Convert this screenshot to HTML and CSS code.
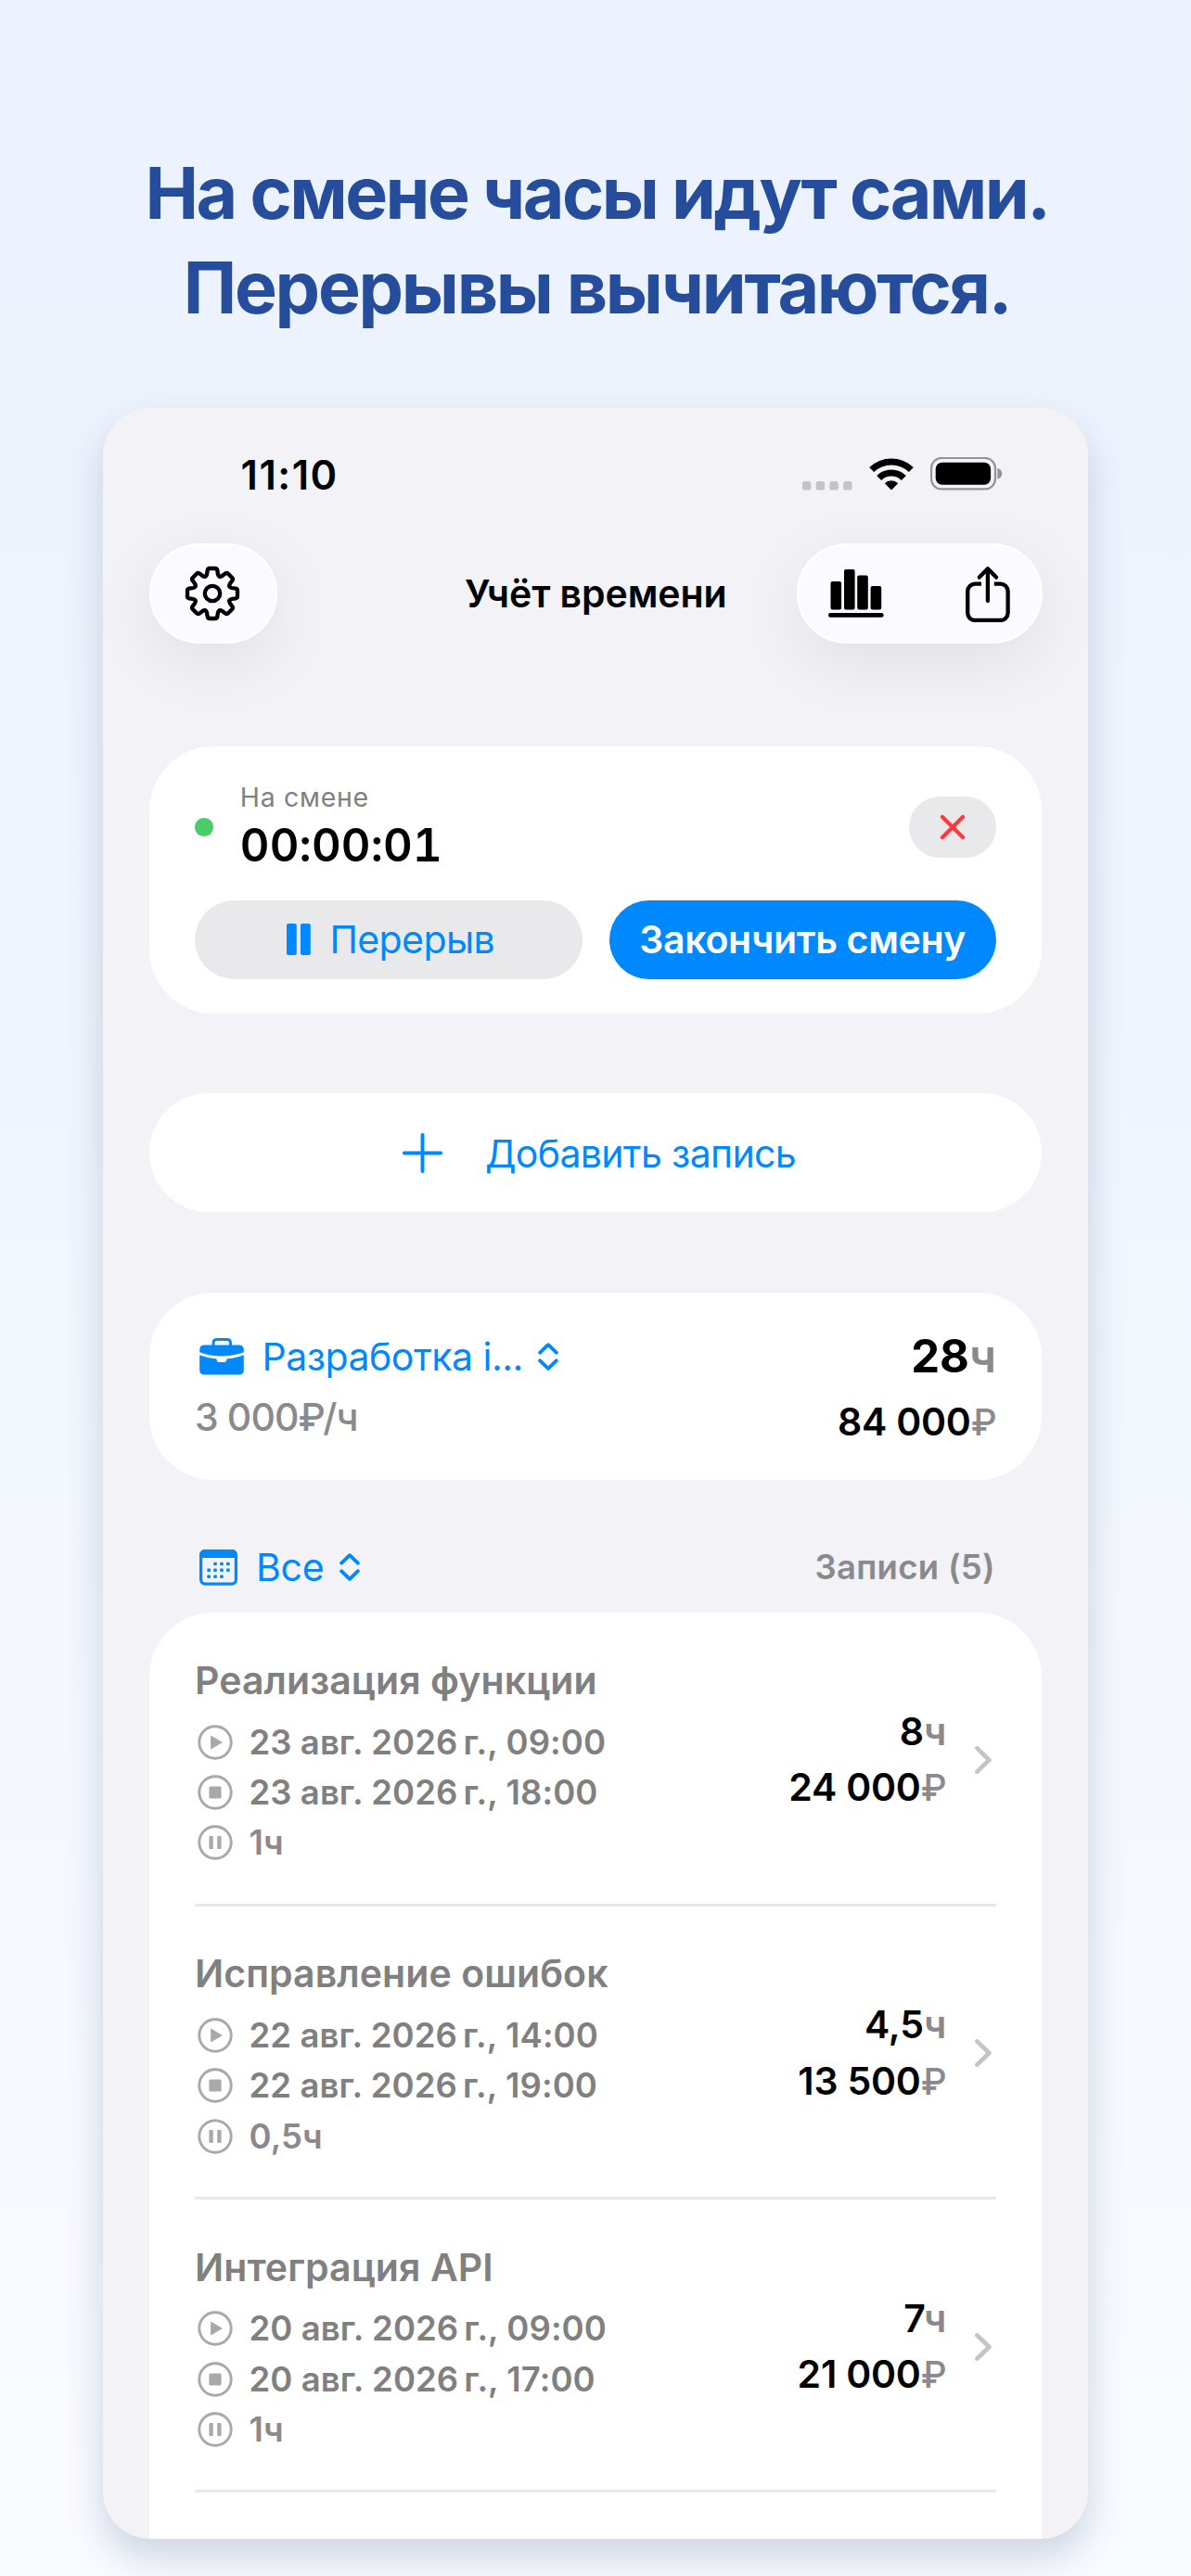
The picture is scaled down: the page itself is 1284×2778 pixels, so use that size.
FILE: index.html
```html
<!DOCTYPE html>
<html lang="ru">
<head>
<meta charset="utf-8">
<title>Учёт времени</title>
<link rel="stylesheet" href="styles.css">
</head>
<body>
<svg class="defs" width="0" height="0" aria-hidden="true">
  <symbol id="play" viewBox="0 0 38 38"><circle cx="19" cy="19" r="17.2" fill="none" stroke="currentColor" stroke-width="2.9"/><path d="M14.8 12.6v12.8L25.8 19z" fill="currentColor" stroke="currentColor" stroke-width="1.4" stroke-linejoin="round"/></symbol>
  <symbol id="stop" viewBox="0 0 38 38"><circle cx="19" cy="19" r="17.2" fill="none" stroke="currentColor" stroke-width="2.9"/><rect x="12.4" y="12.4" width="13.2" height="13.2" rx="1.6" fill="currentColor"/></symbol>
  <symbol id="pause" viewBox="0 0 38 38"><circle cx="19" cy="19" r="17.2" fill="none" stroke="currentColor" stroke-width="2.9"/><rect x="12.4" y="12" width="4.4" height="14" rx="1" fill="currentColor"/><rect x="21.2" y="12" width="4.4" height="14" rx="1" fill="currentColor"/></symbol>
  <symbol id="updown" viewBox="0 0 22 30"><path d="M2.2 10.6L11 2.2l8.8 8.4M2.2 19.4l8.8 8.4 8.8-8.4" fill="none" stroke="currentColor" stroke-width="3.9" stroke-linecap="round" stroke-linejoin="round"/></symbol>
  <symbol id="next" viewBox="0 0 18 30"><path d="M2.4 2.4L15.4 15 2.4 27.6" fill="none" stroke="currentColor" stroke-width="4.7" stroke-linecap="round" stroke-linejoin="round"/></symbol>
  <path id="tooth" d="M-7.6-18.4Q-6.3-19-6-20.5L-5.3-25Q-4.9-27-3-27H3Q4.9-27 5.3-25L6-20.5Q6.3-19 7.6-18.4"/>
</svg>

<h1 class="headline">На смене часы идут сами.<br><span class="headline-second">Перерывы вычитаются.</span></h1>

<main class="phone">
  <div class="status">
    <span class="clock">11:10</span>
    <div class="status-icons">
      <svg class="cell" width="54" height="10" viewBox="0 0 54 10"><rect width="9.4" height="9.6" rx="2.6"/><rect x="14.7" width="9.4" height="9.6" rx="2.6"/><rect x="29.4" width="9.4" height="9.6" rx="2.6"/><rect x="44.1" width="9.4" height="9.6" rx="2.6"/></svg>
      <svg class="wifi" width="48" height="35" viewBox="0 0 48 35"><path d="M2.7 12.6a30.6 30.6 0 0 1 42.6 0M10.7 21.4a19 19 0 0 1 26.6 0" fill="none" stroke="#000" stroke-width="7"/><path d="M24 34.4L16.8 27.3a10.2 10.2 0 0 1 14.4 0z"/></svg>
      <svg class="battery" width="78" height="36" viewBox="0 0 78 36"><rect x="1" y="1" width="69" height="33.4" rx="11" fill="none" stroke="#949498" stroke-width="2.2"/><rect x="5.7" y="5.7" width="59.4" height="24" rx="7"/><path d="M72.4 11.8q4.8 1.6 4.8 5.9t-4.8 5.9z" fill="#949498"/></svg>
    </div>
  </div>

  <nav class="nav">
    <button class="glass glass-one" aria-label="Настройки">
      <svg width="62" height="62" viewBox="-31 -31 62 62" fill="none" stroke="#000" stroke-width="4.3" stroke-linecap="round"><use href="#tooth"/><use href="#tooth" transform="rotate(45)"/><use href="#tooth" transform="rotate(90)"/><use href="#tooth" transform="rotate(135)"/><use href="#tooth" transform="rotate(180)"/><use href="#tooth" transform="rotate(225)"/><use href="#tooth" transform="rotate(270)"/><use href="#tooth" transform="rotate(315)"/><circle r="8.2"/></svg>
    </button>
    <h2 class="nav-title">Учёт времени</h2>
    <div class="glass glass-two">
      <svg width="60" height="54" viewBox="0 0 60 54"><rect x="2.5" y="14" width="11.6" height="30.6" rx="2"/><rect x="17" y="1" width="11.6" height="43.6" rx="2"/><rect x="31.2" y="7.4" width="11.6" height="37.2" rx="2"/><rect x="45.6" y="19" width="11.6" height="25.6" rx="2"/><rect x="0" y="48" width="59.6" height="4.8" rx="2.4"/></svg>
      <svg width="50" height="62" viewBox="0 0 50 62" fill="none" stroke="#000" stroke-width="4.3"><path d="M18 20.6h-6.8a8 8 0 0 0-8 8V52a8 8 0 0 0 8 8h27.4a8 8 0 0 0 8-8V28.6a8 8 0 0 0-8-8h-6.8"/><path d="M24.9 4.6V39M15.8 13.6l9.1-9.3 9.1 9.3" stroke-linecap="round" stroke-linejoin="round"/></svg>
    </div>
  </nav>

  <section class="card shift">
    <div class="shift-top">
      <span class="dot"></span>
      <div class="shift-text">
        <div class="shift-label">На смене</div>
        <div class="timer">00:00:01</div>
      </div>
      <button class="cancel" aria-label="Отменить">
        <svg width="28" height="28" viewBox="0 0 28 28"><path d="M3 3l22 22M25 3L3 25" stroke="#ff383c" stroke-width="4.2" stroke-linecap="round"/></svg>
      </button>
    </div>
    <div class="shift-actions">
      <button class="pill pill-break">
        <svg width="26" height="34" viewBox="0 0 26 34" fill="currentColor"><rect width="10.8" height="34" rx="2"/><rect x="15" width="10.8" height="34" rx="2"/></svg>
        <span>Перерыв</span>
      </button>
      <button class="pill pill-finish">Закончить смену</button>
    </div>
  </section>

  <button class="card add">
    <svg width="43" height="43" viewBox="0 0 43 43"><path d="M21.5 1.9v39.2M1.9 21.5h39.2" stroke="currentColor" stroke-width="3.9" stroke-linecap="round"/></svg>
    <span>Добавить запись</span>
  </button>

  <section class="card client">
    <div class="client-left">
      <div class="client-name">
        <svg width="48" height="40" viewBox="0 0 48 40"><path d="M15 8V5.4Q15 1.5 19 1.5H29.5Q33.5 1.5 33.5 5.4V8" fill="none" stroke="currentColor" stroke-width="3"/><path d="M5.5 7.6H42.5Q47.8 7.6 47.8 13V15.2Q36 19.6 24 19.6T.2 15.2V13Q.2 7.6 5.5 7.6z" fill="currentColor"/><path d="M.2 18.2Q8.5 21.5 18.6 22.6V23.6Q18.6 26 21 26H27Q29.4 26 29.4 23.6V22.6Q39.5 21.5 47.8 18.2V34.5Q47.8 39.6 42.5 39.6H5.5Q.2 39.6 .2 34.5z" fill="currentColor"/></svg>
        <span>Разработка і...</span>
        <svg class="updown" width="22" height="30"><use href="#updown"/></svg>
      </div>
      <div class="client-rate">3 000₽/ч</div>
    </div>
    <div class="client-right">
      <div class="total-hours">28<span class="unit">ч</span></div>
      <div class="total-money">84 000<span class="ruble">₽</span></div>
    </div>
  </section>

  <div class="list-head">
    <div class="filter">
      <svg width="41" height="39" viewBox="0 0 41 39"><rect x="1.6" y="1.4" width="37.8" height="35.7" rx="4.6" fill="none" stroke="currentColor" stroke-width="3.2"/><path d="M1 10.4V5Q1 1 5 1H36Q40 1 40 5V10.4Q39.6 9 37.5 9H3.5Q1.4 9 1 10.4z" fill="currentColor"/><g fill="currentColor"><rect x="15.2" y="13.8" width="3.7" height="3.5" rx="1"/><rect x="22.1" y="13.8" width="3.7" height="3.5" rx="1"/><rect x="29" y="13.8" width="3.7" height="3.5" rx="1"/><rect x="8.3" y="20.6" width="3.7" height="3.5" rx="1"/><rect x="15.2" y="20.6" width="3.7" height="3.5" rx="1"/><rect x="22.1" y="20.6" width="3.7" height="3.5" rx="1"/><rect x="29" y="20.6" width="3.7" height="3.5" rx="1"/><rect x="8.3" y="27.4" width="3.7" height="3.5" rx="1"/><rect x="15.2" y="27.4" width="3.7" height="3.5" rx="1"/><rect x="22.1" y="27.4" width="3.7" height="3.5" rx="1"/></g></svg>
      <span>Все</span>
      <svg class="updown" width="22" height="30"><use href="#updown"/></svg>
    </div>
    <span class="count">Записи (5)</span>
  </div>

  <section class="list">
    <article class="entry">
      <div class="entry-left">
        <h3 class="entry-title">Реализация функции</h3>
        <div class="line"><svg width="38" height="38"><use href="#play"/></svg><span>23 авг. 2026&#8239;г., 09:00</span></div>
        <div class="line"><svg width="38" height="38"><use href="#stop"/></svg><span>23 авг. 2026&#8239;г., 18:00</span></div>
        <div class="line line-break"><svg width="38" height="38"><use href="#pause"/></svg><span>1ч</span></div>
      </div>
      <div class="entry-sum"><div>8<span class="unit">ч</span></div><div>24 000<span class="ruble">₽</span></div></div>
      <svg class="next" width="18" height="30"><use href="#next"/></svg>
    </article>
    <article class="entry">
      <div class="entry-left">
        <h3 class="entry-title">Исправление ошибок</h3>
        <div class="line"><svg width="38" height="38"><use href="#play"/></svg><span>22 авг. 2026&#8239;г., 14:00</span></div>
        <div class="line"><svg width="38" height="38"><use href="#stop"/></svg><span>22 авг. 2026&#8239;г., 19:00</span></div>
        <div class="line line-break"><svg width="38" height="38"><use href="#pause"/></svg><span>0,5ч</span></div>
      </div>
      <div class="entry-sum"><div>4,5<span class="unit">ч</span></div><div>13 500<span class="ruble">₽</span></div></div>
      <svg class="next" width="18" height="30"><use href="#next"/></svg>
    </article>
    <article class="entry">
      <div class="entry-left">
        <h3 class="entry-title">Интеграция API</h3>
        <div class="line"><svg width="38" height="38"><use href="#play"/></svg><span>20 авг. 2026&#8239;г., 09:00</span></div>
        <div class="line"><svg width="38" height="38"><use href="#stop"/></svg><span>20 авг. 2026&#8239;г., 17:00</span></div>
        <div class="line line-break"><svg width="38" height="38"><use href="#pause"/></svg><span>1ч</span></div>
      </div>
      <div class="entry-sum"><div>7<span class="unit">ч</span></div><div>21 000<span class="ruble">₽</span></div></div>
      <svg class="next" width="18" height="30"><use href="#next"/></svg>
    </article>
  </section>
</main>
</body>
</html>
```

FILE: styles.css
```css
* { box-sizing: border-box; }

html, body { margin: 0; }

body {
  height: 2778px;
  padding-top: 157px;
  overflow: hidden;
  background: linear-gradient(180deg, #ebf2fd 0%, #f0f5fd 40%, #f9fbff 100%);
  font-family: Inter, "Noto Sans", sans-serif;
  font-size: 41px;
  color: #000;
}

.defs { display: block; }

svg { display: block; flex: none; }

button {
  margin: 0;
  padding: 0;
  border: 0;
  background: none;
  font: inherit;
  color: inherit;
}

h1, h2, h3 { margin: 0; font-size: inherit; }

.headline {
  height: 204px;
  padding-left: 3px;
  font-size: 77px;
  font-weight: 700;
  line-height: 102px;
  letter-spacing: -2.52px;
  text-align: center;
  color: #264d9b;
}

.headline-second { letter-spacing: -2.25px; }

.phone {
  display: flex;
  flex-direction: column;
  width: 1062px;
  height: 2298px;
  margin: 79px auto 0;
  border-radius: 51px;
  overflow: hidden;
  background: #f2f2f7;
  box-shadow: 0 20px 40px rgba(20, 55, 95, 0.19);
}

/* Status bar */
.status {
  display: flex;
  flex: none;
  justify-content: space-between;
  height: 145.7px;
  padding: 0 92.5px 0 148.5px;
}

.clock {
  font-size: 43.5px;
  font-weight: 600;
  line-height: 144.5px;
  letter-spacing: 1.5px;
}

.status-icons {
  display: flex;
  align-items: flex-end;
  height: 89px;
}

.cell { fill: #c3c3c8; }
.wifi { margin: 0 18px; }

/* Navigation */
.nav {
  display: grid;
  flex: none;
  grid-template-columns: 1fr auto 1fr;
  align-items: center;
  height: 108.3px;
  padding: 0 49.5px 0 50px;
}

.nav-title {
  font-weight: 600;
  letter-spacing: -0.1px;
}

.glass {
  display: flex;
  align-items: center;
  height: 108.3px;
  border: 2px solid #fff;
  border-radius: 54px;
  background: #fbfaff;
  box-shadow: 0 20px 75px rgba(0, 0, 0, 0.08);
}

.glass-one {
  justify-content: center;
  width: 138px;
  padding-right: 2px;
}

.glass-two {
  justify-self: end;
  justify-content: space-between;
  width: 264.6px;
  padding: 0 31.5px 0 32.5px;
}

/* Cards */
.card {
  flex: none;
  width: 962px;
  margin-left: 50px;
  border-radius: 69px;
  background: #fff;
}

.shift {
  height: 287.7px;
  margin-top: 111px;
  padding: 35.7px 49px 0;
}

.shift-top {
  display: flex;
  align-items: center;
  height: 102.6px;
}

.dot {
  width: 19.5px;
  height: 19.5px;
  border-radius: 50%;
  background: #4acd69;
}

.shift-text {
  flex: 1;
  align-self: flex-start;
  padding-left: 29.3px;
}

.shift-label {
  font-size: 28.5px;
  line-height: 38px;
  letter-spacing: 0.7px;
  color: #808080;
}

.timer {
  margin-top: 5px;
  font-size: 49px;
  font-weight: 600;
  line-height: 56px;
  letter-spacing: 0.2px;
  font-variant-numeric: tabular-nums;
}

.cancel {
  display: flex;
  align-items: center;
  justify-content: center;
  width: 94px;
  height: 66px;
  border-radius: 33px;
  background: #e9e9eb;
}

.shift-actions {
  display: grid;
  grid-template-columns: 1fr 1fr;
  gap: 29px;
  margin-top: 27.7px;
}

.pill {
  display: flex;
  align-items: center;
  justify-content: center;
  height: 84.7px;
  border-radius: 43px;
}

.pill-break {
  gap: 20px;
  padding-left: 5px;
  letter-spacing: -0.6px;
  background: #e9e9eb;
  color: #0088ff;
}

.pill-finish {
  font-weight: 600;
  letter-spacing: -0.3px;
  background: #0088ff;
  color: #fff;
}

.add {
  display: flex;
  align-items: center;
  justify-content: center;
  gap: 46px;
  height: 127.7px;
  margin-top: 86.3px;
  padding: 2px 0 0 8px;
  border-radius: 64px;
  letter-spacing: -0.66px;
  color: #0088ff;
}

.client {
  display: flex;
  justify-content: space-between;
  height: 202.3px;
  margin-top: 87px;
  padding: 0 49px;
}

.client-left {
  padding-top: 37.1px;
  line-height: 65px;
}

.client-name {
  display: flex;
  align-items: center;
  gap: 20px;
  padding-left: 4.6px;
  letter-spacing: -0.5px;
  color: #0088ff;
}

.client-name .updown, .filter .updown { margin-left: -4px; }

.client-rate {
  font-weight: 500;
  letter-spacing: -0.9px;
  color: #8a8a8e;
}

.client-right {
  padding-top: 34px;
  font-weight: 600;
  line-height: 70px;
  text-align: right;
}

.total-hours { font-size: 49px; font-weight: 700; }

.total-money { letter-spacing: -0.2px; }

.unit { font-weight: 600; color: #8a8a8e; }

.ruble {
  font-size: 39px;
  font-weight: 500;
  letter-spacing: -0.6px;
  color: #8a8a8e;
}

/* Entries */
.list-head {
  display: flex;
  flex: none;
  align-items: center;
  justify-content: space-between;
  height: 143.3px;
  padding: 45px 100px 0 103.6px;
}

.filter {
  display: flex;
  align-items: center;
  gap: 20.5px;
  letter-spacing: -0.3px;
  color: #0088ff;
}

.count {
  font-size: 36.5px;
  font-weight: 600;
  letter-spacing: 0.3px;
  color: #8a8a8e;
}

.list {
  flex: 1;
  width: 962px;
  margin-left: 50px;
  padding: 0 49px;
  border-radius: 69px 69px 0 0;
  background: #fff;
}

.entry {
  display: flex;
  align-items: center;
  height: 316.4px;
  border-bottom: 3px solid #e8e8e8;
}

.entry-left {
  flex: 1;
  align-self: flex-start;
  padding-top: 42.7px;
  color: #808080;
}

.entry-title {
  margin-bottom: 9.5px;
  font-weight: 600;
  line-height: 60px;
  letter-spacing: 0.08px;
}

.line {
  display: flex;
  align-items: center;
  gap: 18px;
  height: 54.3px;
  padding-left: 2.5px;
  font-size: 36.5px;
  font-weight: 600;
  letter-spacing: 0.07px;
}

.line svg { color: #a9a9a9; }
.line-break { color: #8a8a8e; }

.entry-sum {
  padding-top: 4px;
  font-weight: 600;
  line-height: 60.7px;
  letter-spacing: -0.2px;
  text-align: right;
}

.next {
  margin: 4px 5px 0 31px;
  color: #c4c4c7;
}
```
